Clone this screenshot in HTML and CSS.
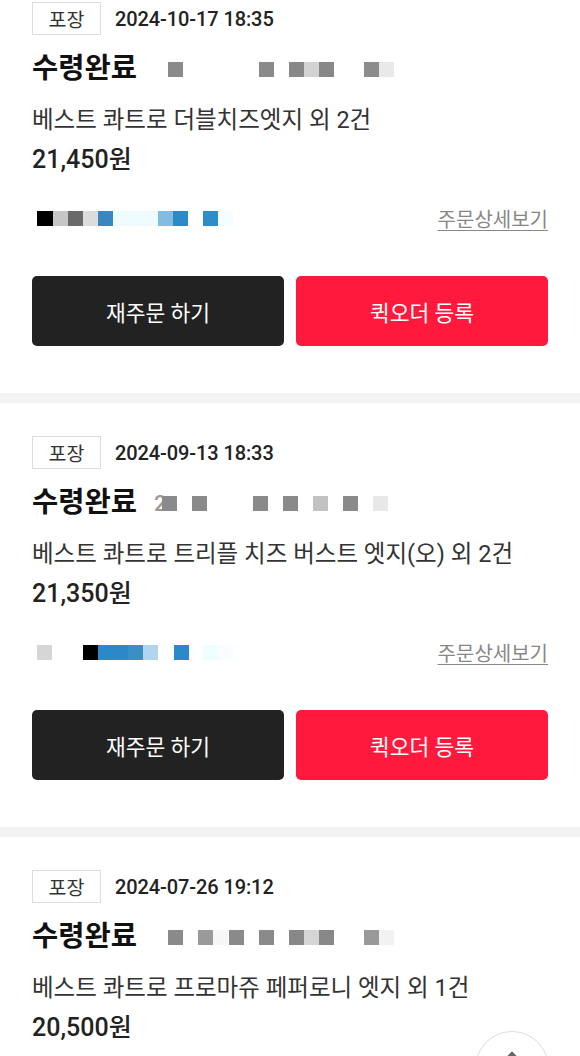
FILE: index.html
```html
<!DOCTYPE html>
<html lang="ko">
<head>
<meta charset="utf-8">
<title>주문내역</title>
<link rel="stylesheet" href="styles.css">
</head>
<body>
<main class="order-list">

  <section class="card card-first">
    <div class="head">
      <span class="tag">포장</span>
      <span class="date">2024-10-17 18:35</span>
    </div>
    <div class="status-row">
      <h2 class="status">수령완료</h2>
      <svg class="mosaic-status" width="226" height="15" viewBox="0 0 226 15">
        <rect x="0" y="0" width="15" height="15" fill="#8a8a8a"/>
        <rect x="91" y="0" width="15" height="15" fill="#8a8a8a"/>
        <rect x="121" y="0" width="15" height="15" fill="#888"/>
        <rect x="136" y="0" width="15" height="15" fill="#d3d3d3"/>
        <rect x="151" y="0" width="15" height="15" fill="#888"/>
        <rect x="196" y="0" width="15" height="15" fill="#8c8c8c"/>
        <rect x="211" y="0" width="15" height="15" fill="#e9e9e9"/>
      </svg>
    </div>
    <p class="product">베스트 콰트로 더블치즈엣지 외 2건</p>
    <p class="price">21,450원</p>
    <div class="link-row">
      <svg class="mosaic-link" width="196" height="15" viewBox="0 0 196 15">
        <rect x="0" y="0" width="16" height="15" fill="#000"/>
        <rect x="16" y="0" width="15" height="15" fill="#c6c6c6"/>
        <rect x="31" y="0" width="15" height="15" fill="#6a6a6a"/>
        <rect x="46" y="0" width="15" height="15" fill="#dcdcdc"/>
        <rect x="61" y="0" width="15" height="15" fill="#3a87bf"/>
        <rect x="76" y="0" width="45" height="15" fill="#effcff"/>
        <rect x="121" y="0" width="15" height="15" fill="#80bde0"/>
        <rect x="136" y="0" width="15" height="15" fill="#2a8bc6"/>
        <rect x="166" y="0" width="15" height="15" fill="#2e8cc8"/>
        <rect x="181" y="0" width="15" height="15" fill="#f4fdff"/>
      </svg>
      <a class="detail" href="#">주문상세보기</a>
    </div>
    <div class="actions">
      <button class="btn btn-dark" type="button">재주문 하기</button>
      <button class="btn btn-red" type="button">퀵오더 등록</button>
    </div>
  </section>

  <section class="card">
    <div class="head">
      <span class="tag">포장</span>
      <span class="date">2024-09-13 18:33</span>
    </div>
    <div class="status-row">
      <h2 class="status">수령완료</h2>
      <span class="peek">2</span>
      <svg class="mosaic-peek" width="226" height="15" viewBox="0 0 226 15">
        <rect x="0" y="0" width="15" height="15" fill="#8a8a8a"/>
        <rect x="30" y="0" width="15" height="15" fill="#8a8a8a"/>
        <rect x="91" y="0" width="15" height="15" fill="#8a8a8a"/>
        <rect x="121" y="0" width="15" height="15" fill="#8a8a8a"/>
        <rect x="151" y="0" width="15" height="15" fill="#c2c2c2"/>
        <rect x="181" y="0" width="15" height="15" fill="#8a8a8a"/>
        <rect x="211" y="0" width="15" height="15" fill="#e8e8e8"/>
      </svg>
    </div>
    <p class="product">베스트 콰트로 트리플 치즈 버스트 엣지(오) 외 2건</p>
    <p class="price">21,350원</p>
    <div class="link-row">
      <svg class="mosaic-link2" width="196" height="15" viewBox="0 0 196 15">
        <rect x="0" y="0" width="15" height="15" fill="#d6d6d6"/>
        <rect x="46" y="0" width="15" height="15" fill="#000"/>
        <rect x="61" y="0" width="30" height="15" fill="#2a8ac8"/>
        <rect x="91" y="0" width="15" height="15" fill="#3b8fc5"/>
        <rect x="106" y="0" width="15" height="15" fill="#b0d5ec"/>
        <rect x="137" y="0" width="15" height="15" fill="#2a8ac8"/>
        <rect x="166" y="0" width="15" height="15" fill="#eefdff"/>
        <rect x="181" y="0" width="15" height="15" fill="#f8feff"/>
      </svg>
      <a class="detail" href="#">주문상세보기</a>
    </div>
    <div class="actions">
      <button class="btn btn-dark" type="button">재주문 하기</button>
      <button class="btn btn-red" type="button">퀵오더 등록</button>
    </div>
  </section>

  <section class="card">
    <div class="head">
      <span class="tag">포장</span>
      <span class="date">2024-07-26 19:12</span>
    </div>
    <div class="status-row">
      <h2 class="status">수령완료</h2>
      <svg class="mosaic-status" width="226" height="15" viewBox="0 0 226 15">
        <rect x="0" y="0" width="15" height="15" fill="#8a8a8a"/>
        <rect x="30" y="0" width="15" height="15" fill="#9a9a9a"/>
        <rect x="45" y="0" width="15" height="15" fill="#f6f6f6"/>
        <rect x="61" y="0" width="15" height="15" fill="#8a8a8a"/>
        <rect x="91" y="0" width="15" height="15" fill="#8a8a8a"/>
        <rect x="121" y="0" width="15" height="15" fill="#888"/>
        <rect x="136" y="0" width="15" height="15" fill="#d5d5d5"/>
        <rect x="151" y="0" width="15" height="15" fill="#888"/>
        <rect x="196" y="0" width="15" height="15" fill="#999"/>
        <rect x="211" y="0" width="15" height="15" fill="#f2f2f2"/>
      </svg>
    </div>
    <p class="product">베스트 콰트로 프로마쥬 페퍼로니 엣지 외 1건</p>
    <p class="price">20,500원</p>
    <div class="link-row">
      <svg class="mosaic-link" width="196" height="15" viewBox="0 0 196 15">
        <rect x="0" y="0" width="15" height="15" fill="#000"/>
        <rect x="15" y="0" width="15" height="15" fill="#c6c6c6"/>
        <rect x="61" y="0" width="15" height="15" fill="#3a87bf"/>
        <rect x="136" y="0" width="15" height="15" fill="#2a8bc6"/>
      </svg>
      <a class="detail" href="#">주문상세보기</a>
    </div>
    <div class="actions">
      <button class="btn btn-dark" type="button">재주문 하기</button>
      <button class="btn btn-red" type="button">퀵오더 등록</button>
    </div>
  </section>

</main>

<button class="to-top" type="button" aria-label="맨 위로">
  <svg width="26" height="26" viewBox="0 0 26 26" fill="none" stroke="#666" stroke-width="2.4" stroke-linecap="round" stroke-linejoin="round">
    <path d="M13 3 V23"/>
    <path d="M5 11 L13 3 L21 11"/>
  </svg>
</button>
</body>
</html>
```

FILE: styles.css
```css
* {
  box-sizing: border-box;
}

html, body {
  margin: 0;
  padding: 0;
  background: #ffffff;
  overflow: hidden;
}

body {
  font-family: Roboto, "Noto Sans CJK KR", "Noto Sans", sans-serif;
  color: #222222;
}

.order-list {
  display: flex;
  flex-direction: column;
}

.card {
  padding: 33px 32px 47px;
  border-bottom: 10px solid #f3f3f3;
}

.card-first {
  padding-top: 2px;
}

.head {
  display: flex;
  align-items: center;
  height: 33px;
}

.tag {
  display: flex;
  align-items: center;
  justify-content: center;
  width: 69px;
  height: 33px;
  border: 1.5px solid #dddddd;
  font-size: 19.5px;
  color: #333333;
}

.date {
  margin-left: 14px;
  font-size: 20px;
  font-weight: 500;
  letter-spacing: -0.1px;
  color: #222222;
}

.status-row {
  display: flex;
  align-items: center;
  margin-top: 17px;
  height: 34px;
}

.status {
  margin: 0;
  font-size: 28.5px;
  font-weight: 700;
  line-height: 34px;
  color: #111111;
}

.mosaic-status {
  display: block;
  margin-left: 31px;
}

.peek {
  margin-left: 17px;
  font-size: 22px;
  font-weight: 500;
  color: #9a9a9a;
}

.mosaic-peek {
  display: block;
  margin-left: -4px;
}

.product {
  margin: 19px 0 0;
  font-size: 23.5px;
  line-height: 30px;
  color: #333333;
}

.price {
  margin: 10px 0 0;
  font-size: 25px;
  line-height: 30px;
  font-weight: 500;
  color: #222222;
}

.link-row {
  display: flex;
  align-items: center;
  justify-content: space-between;
  margin-top: 31px;
  height: 24px;
}

.link-row svg {
  display: block;
  margin-left: 5px;
}

.detail {
  font-size: 20px;
  color: #888888;
  text-decoration: underline;
  text-underline-offset: 3px;
  text-decoration-thickness: 1px;
}

.actions {
  display: grid;
  grid-template-columns: 1fr 1fr;
  gap: 12px;
  margin-top: 46px;
}

.btn {
  height: 70px;
  border: none;
  border-radius: 5px;
  font-family: Roboto, "Noto Sans CJK KR", sans-serif;
  font-size: 21.5px;
  color: #ffffff;
}

.btn-dark {
  background: #222222;
}

.btn-red {
  background: #ff1a3d;
}

.to-top {
  position: fixed;
  right: 31px;
  bottom: -49px;
  width: 74px;
  height: 74px;
  border-radius: 50%;
  border: 1px solid #dcdcdc;
  background: #ffffff;
  display: flex;
  justify-content: center;
  align-items: flex-start;
  padding: 18px 0 0;
}
```
